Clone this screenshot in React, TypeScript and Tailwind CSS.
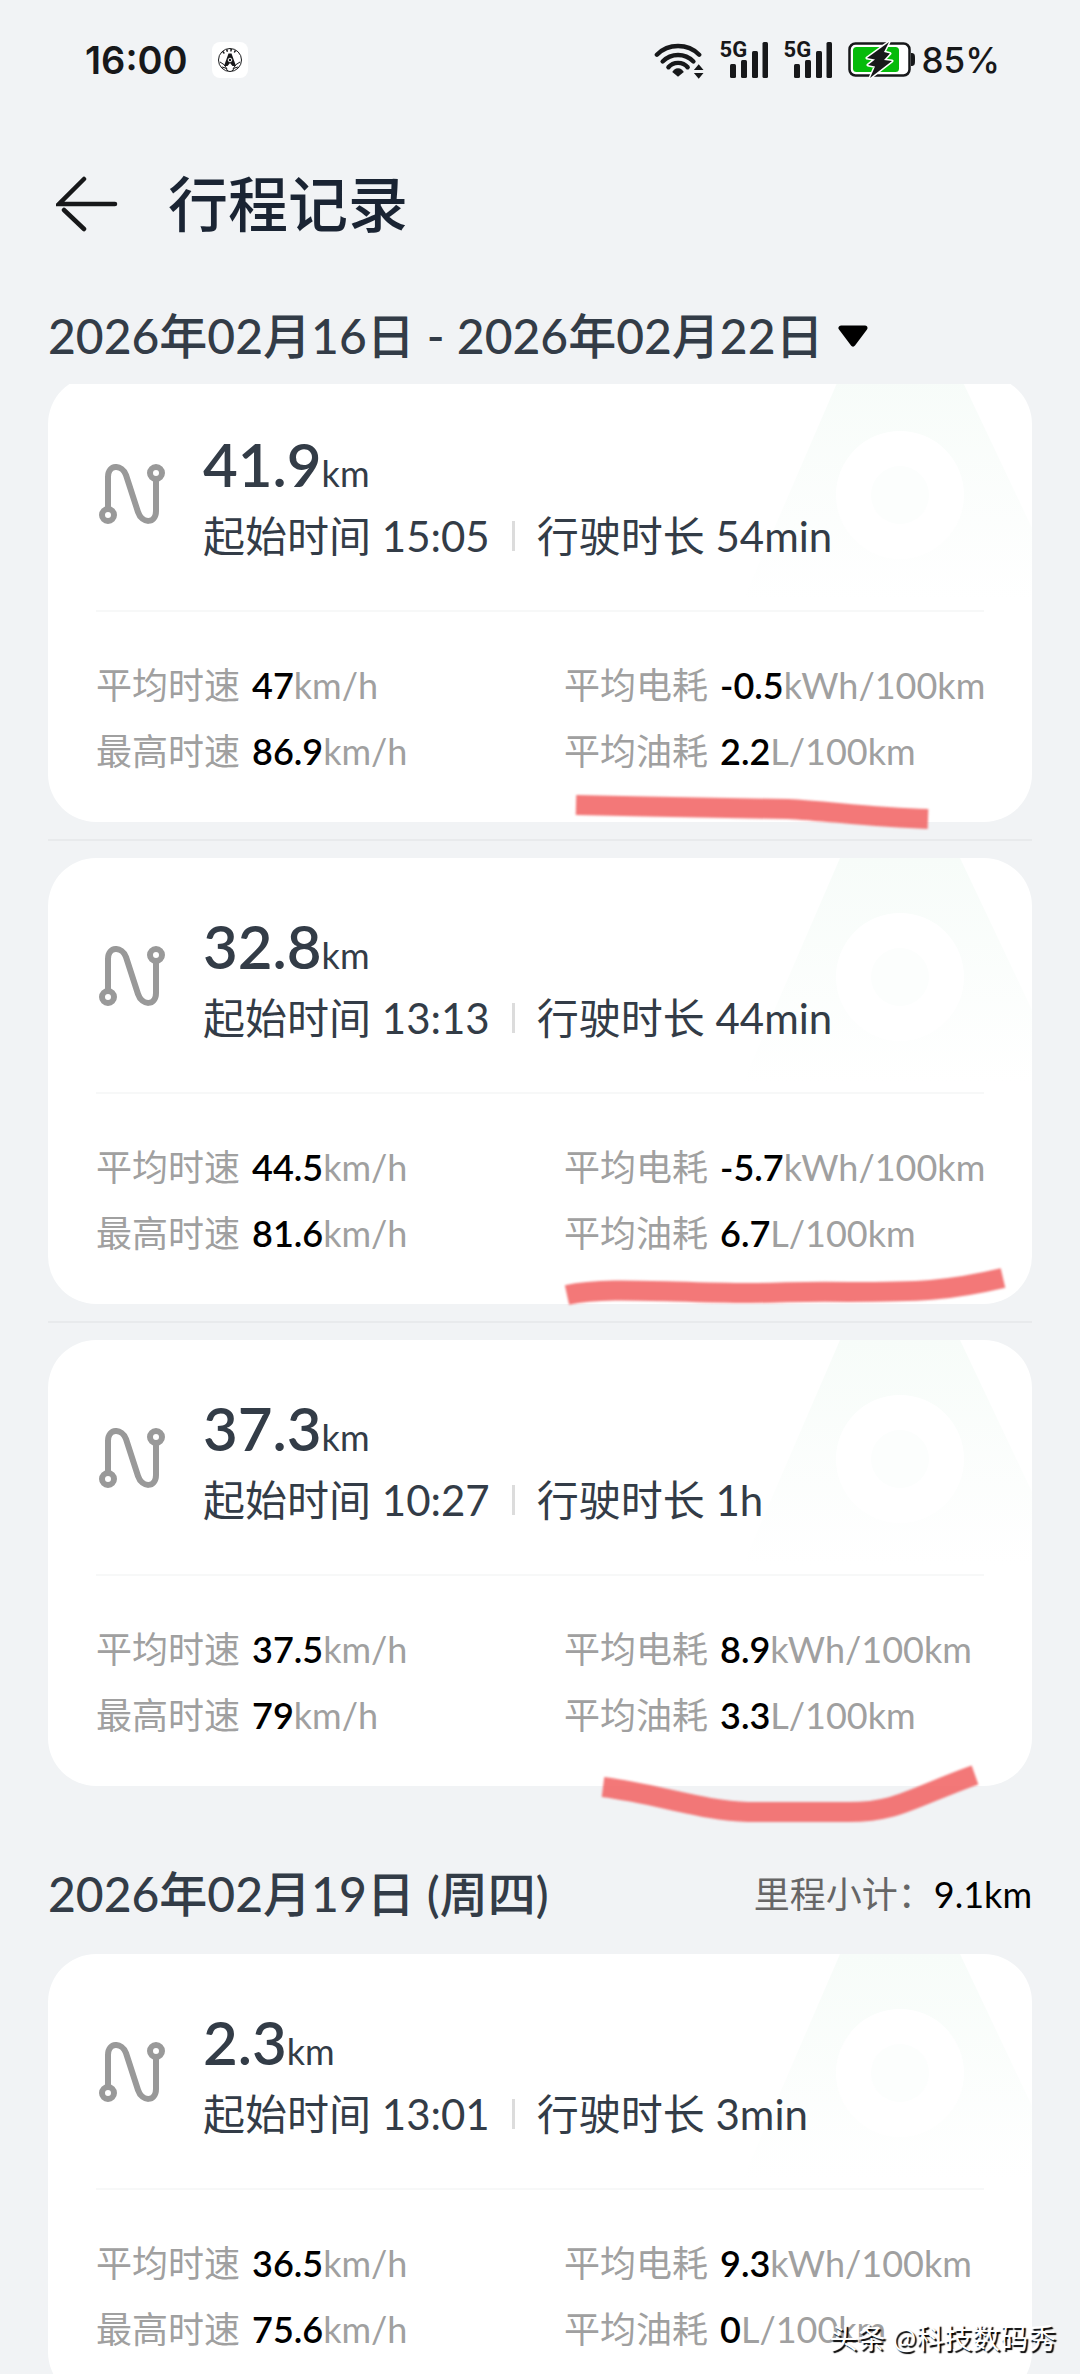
// App.tsx
import { Fragment, useState } from "react";

type Trip = {
  id: number;
  distance: string;
  start: string;
  duration: string;
  avgSpeed: string;
  maxSpeed: string;
  power: string;
  fuel: string;
  mark?: string; // highlighter stroke, in px from the card's corner
};

const weekTrips: Trip[] = [
  {
    id: 1,
    distance: "41.9",
    start: "15:05",
    duration: "54min",
    avgSpeed: "47",
    maxSpeed: "86.9",
    power: "-0.5",
    fuel: "2.2",
    mark: "M528 429 C600 431 690 432 740 433 C780 435 820 441 880 443",
  },
  {
    id: 2,
    distance: "32.8",
    start: "13:13",
    duration: "44min",
    avgSpeed: "44.5",
    maxSpeed: "81.6",
    power: "-5.7",
    fuel: "6.7",
    mark: "M519 437 C560 428 620 435 702 435 C740 435 750 433 800 434 C870 434 900 433 955 420",
  },
  {
    id: 3,
    distance: "37.3",
    start: "10:27",
    duration: "1h",
    avgSpeed: "37.5",
    maxSpeed: "79",
    power: "8.9",
    fuel: "3.3",
    mark: "M555 447 C610 454 655 471 700 472 L800 472 C850 472 865 457 927 435",
  },
];

const dayTrips: Trip[] = [
  {
    id: 4,
    distance: "2.3",
    start: "13:01",
    duration: "3min",
    avgSpeed: "36.5",
    maxSpeed: "75.6",
    power: "9.3",
    fuel: "0",
  },
];

function WifiIcon() {
  return (
    <svg width="50" height="37" viewBox="0 0 52 38" fill="none" stroke="#17181a" strokeWidth="4.6" strokeLinecap="round">
      <path d="M3 13 C15 1 35 1 47 13" />
      <path d="M9 20 C18 11 32 11 41 20" />
      <path d="M15 26 C20 20 30 20 35 26" />
      <path d="M25 27 C22 27 20 29 19 31 L25 36 L31 31 C30 29 28 27 25 27 Z" fill="#17181a" stroke="none" />
      <path d="M46.5 23 L51.5 29 H41.5 Z M46.5 38 L51.5 32 H41.5 Z" fill="#17181a" stroke="none" />
    </svg>
  );
}

function Signal() {
  return (
    <div className="relative h-9 w-12">
      <span className="absolute left-0 -top-1 font-['Roboto',sans-serif] text-[22px] leading-6 font-bold">5G</span>
      <svg className="absolute right-0 top-0" width="38" height="36" viewBox="0 0 38 36" fill="#17181a">
        <rect x="0" y="22" width="6" height="14" rx="1.5" />
        <rect x="11" y="18" width="6" height="18" rx="1.5" />
        <rect x="22" y="9" width="6" height="27" rx="1.5" />
        <rect x="32.5" y="0" width="5.5" height="36" rx="1.5" />
      </svg>
    </div>
  );
}

function BatteryIcon() {
  return (
    <svg width="68" height="38" viewBox="0 0 68 38" fill="none">
      <rect x="1.5" y="2.5" width="60" height="32" rx="6" fill="#fff" stroke="#17181a" strokeWidth="2.5" />
      <path d="M63 12 C67 12 67 14 67 18.5 C67 23 67 25 63 25 Z" fill="#17181a" />
      <rect x="5" y="6" width="46" height="25" rx="3.5" fill="#06bb0b" />
      <path
        d="M41 1 L19 17 L27 18.5 L20 24 L27 25.5 L22 37 L44 20 L36 19 L42 12.5 L36 11 Z"
        fill="#17181a"
        stroke="#fff"
        strokeWidth="3"
        strokeLinejoin="round"
        paintOrder="stroke"
      />
    </svg>
  );
}

function AppBadge() {
  return (
    <span className="flex size-9 items-center justify-center rounded-lg bg-white">
      <svg width="26" height="26" viewBox="0 0 26 26" fill="none" stroke="#17181a">
        <circle cx="13" cy="13" r="11.5" strokeWidth="1" />
        <path d="M6 6 A10 10 0 0 1 20 6" strokeWidth="2.5" strokeDasharray="1.5 2.5" />
        <path d="M3 15 Q8 17 10 22 M23 15 Q18 17 16 22 M5 20 Q9 20 11 24 M21 20 Q17 20 15 24" />
        <path d="M7 19 L11.5 6.5 H14.5 L19 19 H15.5 L13 16 L10.5 19 Z" fill="#17181a" stroke="none" />
        <circle cx="13" cy="13" r="1.8" fill="#17181a" stroke="#fff" />
      </svg>
    </span>
  );
}

function RouteIcon() {
  return (
    <svg className="shrink-0" width="66" height="60" viewBox="0 0 66 60" fill="none" stroke="#999" strokeWidth="6">
      <path d="M9 45 V13 C9 0 23 0 27 11 L39 48 C43 60 57 60 57 47 V15" />
      <circle cx="9" cy="51" r="6" fill="#fff" />
      <circle cx="57" cy="9" r="6" fill="#fff" />
    </svg>
  );
}

function CardArt() {
  return (
    <svg className="absolute right-0 top-0" width="300" height="260" viewBox="0 0 300 260" aria-hidden="true">
      <defs>
        <linearGradient id="art" x1="0" y1="0" x2="0" y2="0.9">
          <stop offset="0" stopColor="#f7fcf9" />
          <stop offset="1" stopColor="#fff" />
        </linearGradient>
      </defs>
      <path d="M108 0 H228 L318 190 V250 H0 Z" fill="url(#art)" />
      <circle cx="168" cy="119" r="64" fill="#fff" />
      <circle cx="168" cy="119" r="29" fill="#fcfefd" />
    </svg>
  );
}

function Stat({ label, value, unit }: { label: string; value: string; unit: string }) {
  return (
    <div className="flex gap-3 whitespace-nowrap text-4xl leading-[66px]">
      <dt className="text-[#a0a0a0]">{label}</dt>
      <dd className="font-semibold text-black">
        {value}
        <span className="font-normal text-[#a0a0a0]">{unit}</span>
      </dd>
    </div>
  );
}

function TripCard({ trip }: { trip: Trip }) {
  return (
    <li className="relative">
      <article className="relative overflow-hidden rounded-[48px] bg-white px-12 pb-[38px]">
        <CardArt />
        <div className="relative flex items-center gap-[38px] border-b-2 border-[#f7f8f8] pt-[46px] pb-11 pl-[3px]">
          <RouteIcon />
          <div className="text-[#333c47]">
            <p className="text-6xl leading-[84px] font-semibold">
              {trip.distance}
              <span className="text-4xl leading-none font-normal">km</span>
            </p>
            <p className="flex items-center gap-[22px] whitespace-nowrap text-[42px] leading-[60px]">
              <span>起始时间 {trip.start}</span>
              <i className="h-[30px] w-[3px] bg-[#dcdcdc]" />
              <span>行驶时长 {trip.duration}</span>
            </p>
          </div>
        </div>
        <dl className="relative grid grid-cols-2 gap-x-12 pt-10">
          <Stat label="平均时速" value={trip.avgSpeed} unit="km/h" />
          <Stat label="平均电耗" value={trip.power} unit="kWh/100km" />
          <Stat label="最高时速" value={trip.maxSpeed} unit="km/h" />
          <Stat label="平均油耗" value={trip.fuel} unit="L/100km" />
        </dl>
      </article>
      {trip.mark && (
        <svg className="pointer-events-none absolute inset-0 z-10 size-full overflow-visible" fill="none">
          <path className="blur-[1px]" d={trip.mark} stroke="#f26969" strokeOpacity="0.9" strokeWidth="20" />
        </svg>
      )}
    </li>
  );
}

export default function App() {
  const [open, setOpen] = useState(false);

  return (
    <div className="relative flex h-screen flex-col overflow-hidden bg-[#f1f3f5] font-['Lato','Noto_Sans_CJK_SC',sans-serif]">
      <div className="flex h-[120px] shrink-0 items-center justify-between pr-20 pl-[85px] font-['Inter',sans-serif] text-[#17181a]">
        <div className="flex items-center gap-6">
          <span className="text-[38px] font-semibold">16:00</span>
          <AppBadge />
        </div>
        <div className="flex items-center gap-4">
          <WifiIcon />
          <Signal />
          <Signal />
          <div className="flex items-center gap-1.5">
            <BatteryIcon />
            <span className="text-[35px] font-medium">85%</span>
          </div>
        </div>
      </div>

      <header className="flex h-[168px] shrink-0 items-center gap-[50px] px-14">
        <button type="button" aria-label="返回">
          <svg width="62" height="58" viewBox="0 0 62 58" fill="none" stroke="#17181a" strokeWidth="4.5" strokeLinecap="round">
            <path d="M28 4 L3 29 H59 M8 35 L28 54" />
          </svg>
        </button>
        <h1 className="text-6xl font-medium text-[#1a2433]">行程记录</h1>
      </header>

      <div className="h-24 shrink-0 px-12">
        <button
          type="button"
          aria-expanded={open}
          onClick={() => setOpen(!open)}
          className="flex h-24 items-center gap-3.5 whitespace-nowrap text-5xl font-medium text-[#333c47]"
        >
          2026年02月16日 - 2026年02月22日
          <svg width="30" height="22" viewBox="0 0 30 22">
            <path d="M3 3 H27 L15 19 Z" stroke="#000" strokeWidth="5" strokeLinejoin="round" />
          </svg>
        </button>
      </div>

      <main className="min-h-0 flex-1 overflow-y-auto px-12 [scrollbar-width:none]">
        <ul className="-mt-2">
          {weekTrips.map((trip, i) => (
            <Fragment key={trip.id}>
              {i > 0 && <li className="my-[17px] h-[2px] bg-[#e8eaec]" />}
              <TripCard trip={trip} />
            </Fragment>
          ))}
        </ul>

        <div className="flex h-[168px] items-center justify-between pt-12 whitespace-nowrap">
          <h2 className="text-5xl font-medium text-[#333c47]">2026年02月19日 (周四)</h2>
          <p className="text-4xl text-[#666]">
            里程小计：<span className="text-black">9.1km</span>
          </p>
        </div>
        <ul>
          {dayTrips.map((trip) => (
            <TripCard key={trip.id} trip={trip} />
          ))}
        </ul>
      </main>

      <p className="absolute right-6 bottom-4 z-20 text-[28px] leading-10 text-white [text-shadow:2px_2px_1px_#000]">
        头条 @科技数码秀
      </p>
    </div>
  );
}
